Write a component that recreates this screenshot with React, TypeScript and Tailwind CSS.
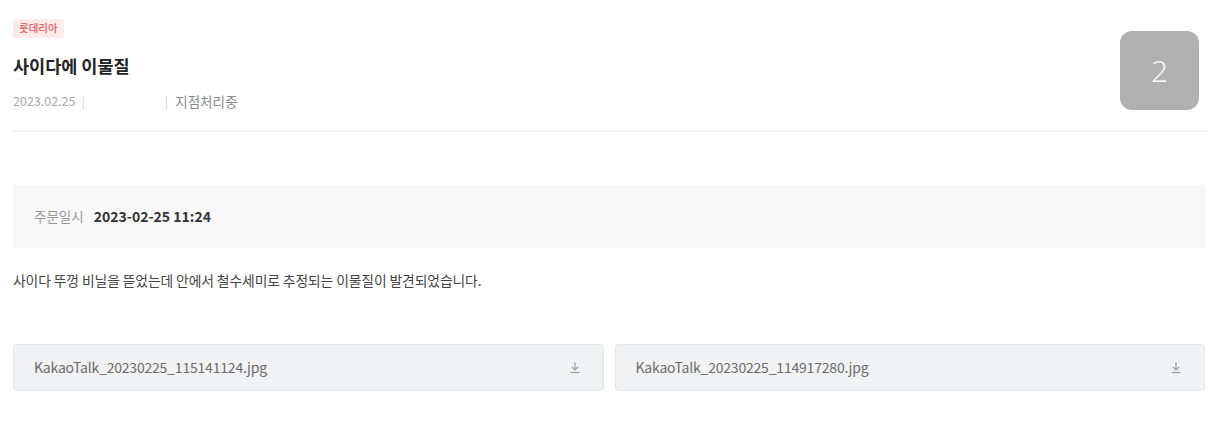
import React from "react";

const font = { fontFamily: '"Noto Sans CJK KR", "Noto Sans", sans-serif' };

function DownloadIcon() {
  return (
    <svg width="12" height="13" viewBox="0 0 12 13" fill="none" stroke="#9a9a9a" strokeWidth="1.2">
      <path d="M6 1.5v7" />
      <path d="M3 5.8l3 3 3-3" />
      <path d="M1.5 11.5h9" />
    </svg>
  );
}

function FileBox({ name }: { name: string }) {
  return (
    <div className="flex h-[47px] items-center justify-between rounded-[4px] border border-[#e6e7e8] bg-[#f1f2f3] pl-[20px] pr-[22px]">
      <span className="text-[14px] tracking-[-0.2px] text-[#6b6b6b]">{name}</span>
      <DownloadIcon />
    </div>
  );
}

export default function App() {
  return (
    <div className="relative h-[428px] w-[1227px] overflow-hidden bg-white" style={font}>
      <div className="w-[1205px] pl-[13px]">
        <div className="flex pt-[19px]">
          <span className="flex h-[19px] items-center rounded-[3px] bg-[#fdeaea] px-[6px] text-[10.5px] font-medium leading-none text-[#e0605e]">
            롯데리아
          </span>
        </div>
        <h1 className="mt-[17px] h-[22px] text-[17.5px] font-bold leading-[22px] text-[#222]">사이다에 이물질</h1>
        <div className="mt-[16px] flex h-[16px] items-center text-[12.5px] leading-[16px] text-[#a8a8a8]">
          <span>2023.02.25</span>
          <span className="ml-[6px] text-[#d0d0d0]">|</span>
          <span className="ml-[80px] text-[#d0d0d0]">|</span>
          <span className="ml-[7px] text-[13.5px] text-[#8a8a8a]">지점처리중</span>
        </div>
        <div className="mt-[21px] h-[2px] w-[1194px] bg-[#f2f2f2]" />
        <div className="mt-[53px] flex h-[63px] items-center bg-[#f8f8f9] pl-[21px]">
          <span className="text-[13.5px] text-[#999]">주문일시</span>
          <span className="ml-[10px] text-[14px] font-bold text-[#333]">2023-02-25 11:24</span>
        </div>
        <p className="mt-[23px] text-[13.8px] leading-[18px] tracking-[-0.1px] text-[#444]">
          사이다 뚜껑 비닐을 뜯었는데 안에서 철수세미로 추정되는 이물질이 발견되었습니다.
        </p>
        <div className="mt-[55px] grid grid-cols-2 gap-[11px]">
          <FileBox name="KakaoTalk_20230225_115141124.jpg" />
          <FileBox name="KakaoTalk_20230225_114917280.jpg" />
        </div>
      </div>
      <div className="absolute left-[1120px] top-[31px] flex h-[79px] w-[79px] items-center justify-center rounded-[12px] bg-[#b1b1b1]">
        <span className="text-[30px] font-light text-white" style={{ fontFamily: '"Open Sans", "Noto Sans", sans-serif' }}>2</span>
      </div>
    </div>
  );
}
